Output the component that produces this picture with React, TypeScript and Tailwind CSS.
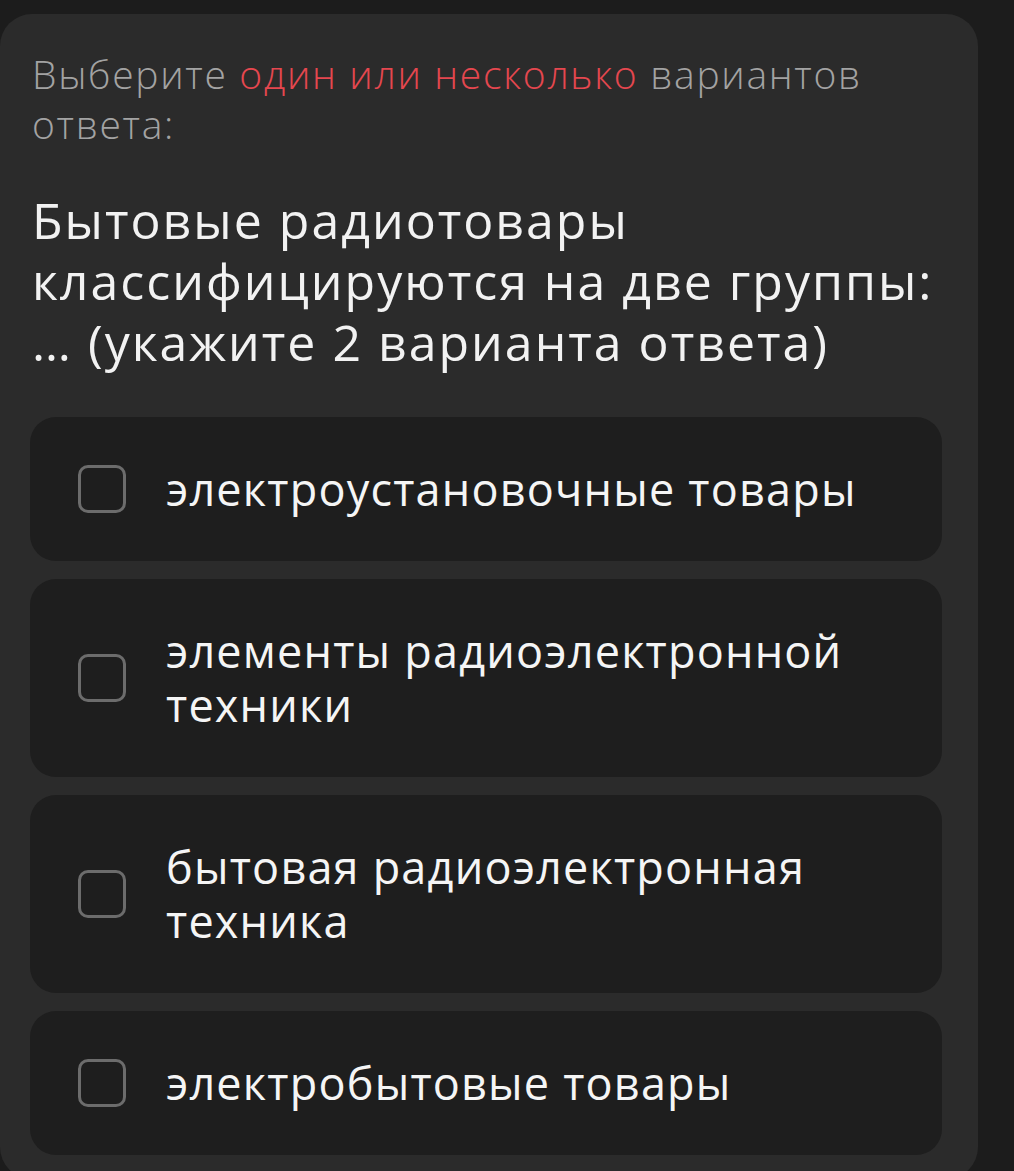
const OPTIONS = [
  "электроустановочные товары",
  "элементы радиоэлектронной техники",
  "бытовая радиоэлектронная техника",
  "электробытовые товары",
];

function Checkbox() {
  return <div className="w-12 h-12 shrink-0 rounded-[10px] border-[3px] border-[#6c6c6c]" />;
}

export default function App() {
  return (
    <div
      className="min-h-[1171px] bg-[#1c1c1c] pt-[14px] overflow-hidden"
      style={{ fontFamily: '"Open Sans", "Noto Sans", sans-serif' }}
    >
      <div className="w-[978px] min-h-[1165px] bg-[#2b2b2b] rounded-[32px] pt-[35px] pl-[30px] pr-[36px] pb-6">
        <p className="pl-[2px] text-[39px] leading-[50px] font-light text-[#a3a3a3] tracking-[1.7px]">
          Выберите <span className="text-[#e5474f]">один или несколько</span> вариантов ответа:
        </p>

        <h2 className="mt-[41px] pl-[2px] text-[50px] leading-[61px] text-[#f2f2f2] tracking-[2px]">
          Бытовые радиотовары классифицируются на две группы: … (укажите 2 варианта ответа)
        </h2>

        <div className="mt-[44px] flex flex-col gap-[18px]">
          {OPTIONS.map((o) => (
            <div key={o} className="flex items-center gap-10 bg-[#1e1e1e] rounded-[26px] pl-12 pr-8 py-[45px]">
              <Checkbox />
              <span className="text-[45px] leading-[54px] text-[#f5f5f5] tracking-[1.2px]">{o}</span>
            </div>
          ))}
        </div>
      </div>
    </div>
  );
}
